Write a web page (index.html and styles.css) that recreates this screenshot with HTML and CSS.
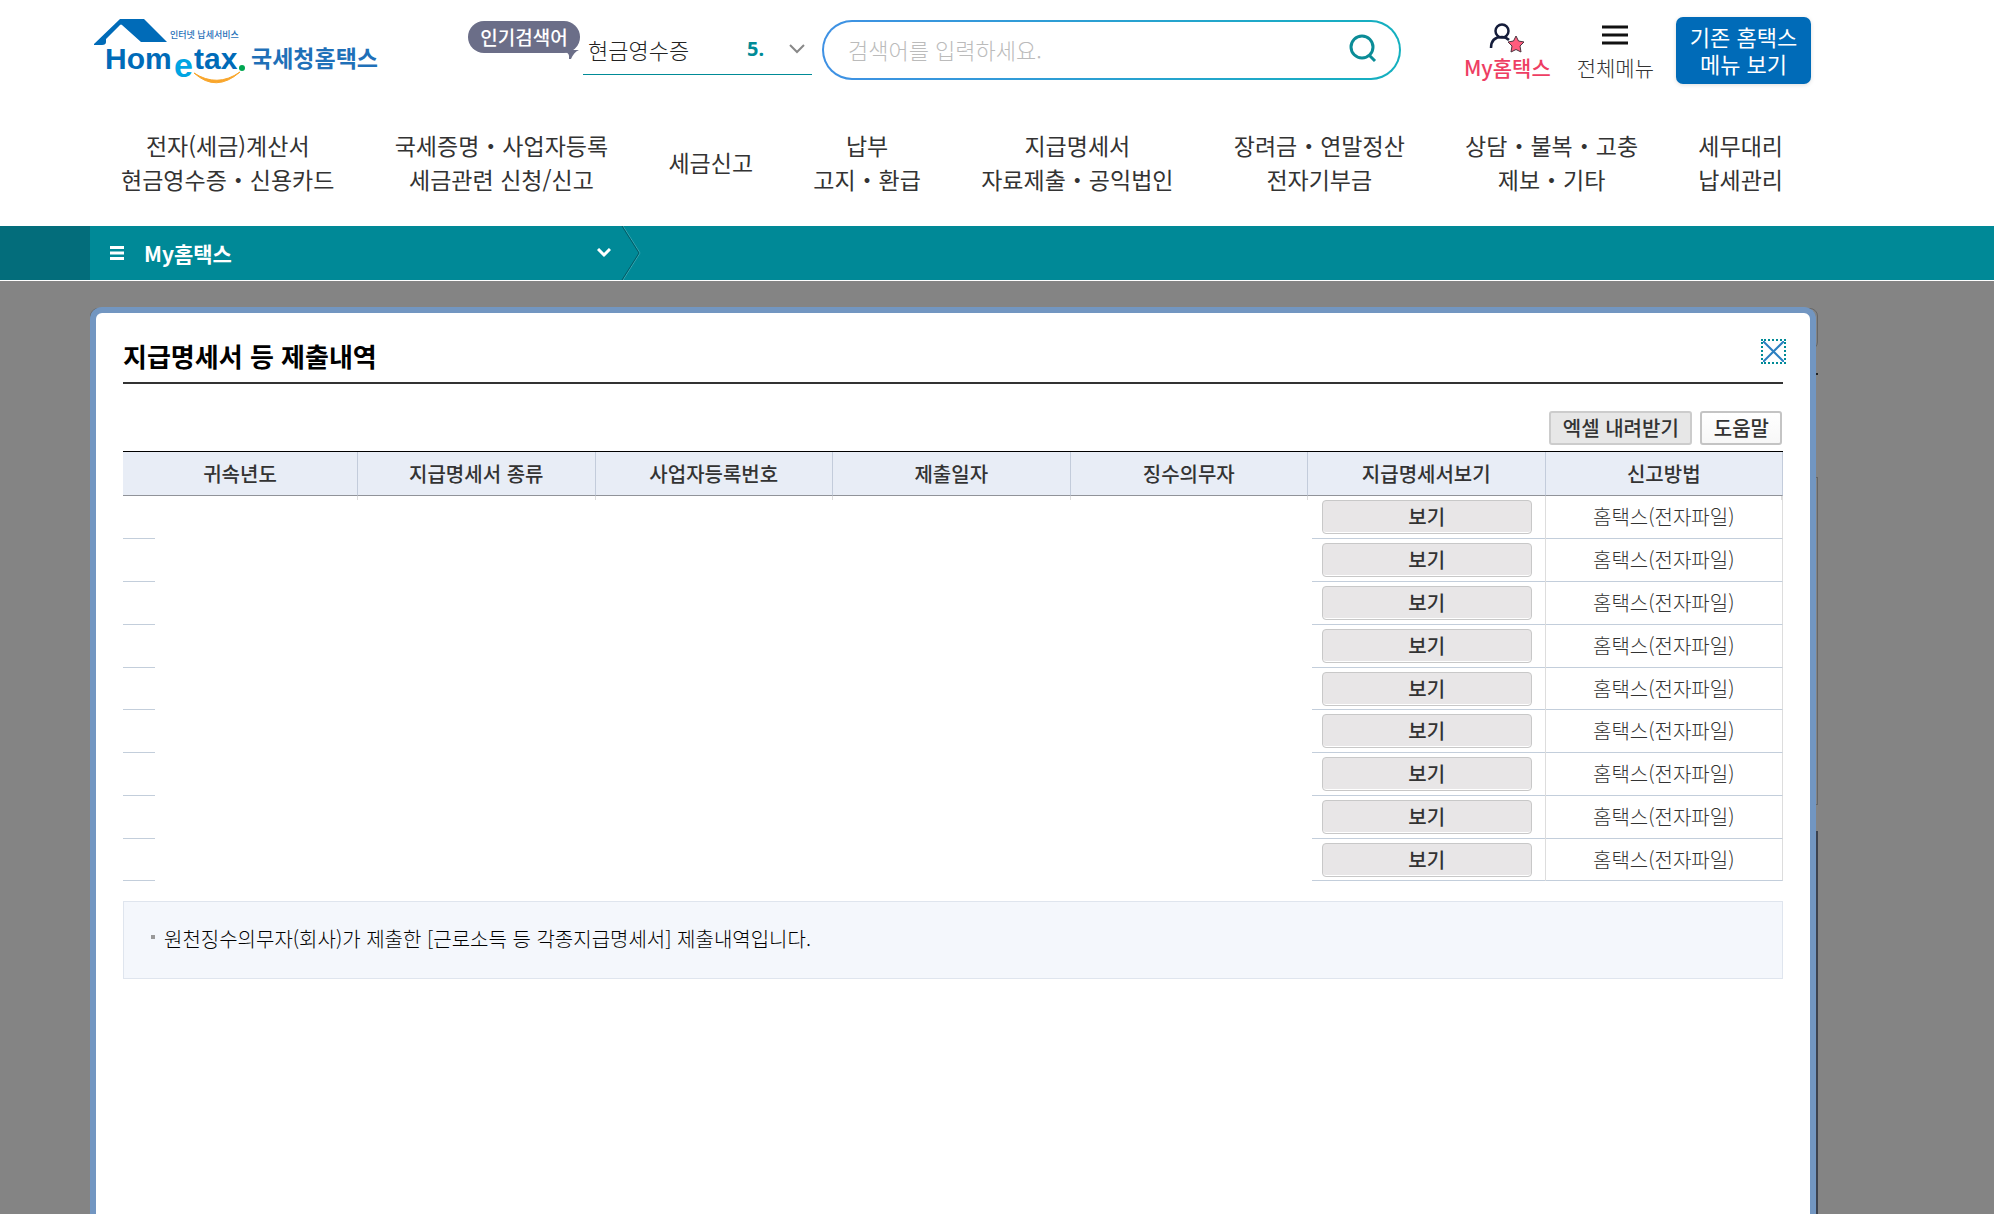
FILE: index.html
```html
<!DOCTYPE html>
<html lang="ko">
<head>
<meta charset="utf-8">
<meta name="viewport" content="width=device-width, initial-scale=1">
<title>국세청 홈택스</title>
<link rel="stylesheet" href="styles.css">
</head>
<body>
<header class="site-header">
  <div class="top-row">
    <a class="logo" href="#" aria-label="국세청홈택스">
      <svg width="286" height="68" viewBox="0 0 286 68">
        <path class="logo-roof" d="M0 28 26 3H50L73 26H47L28 9Q27 8 26 9L12 23V26Q12 29 8 29H1Q-1 29 0 28Z"/>
        <text class="logo-latin" x="11" y="53">Hom</text>
        <text class="logo-e" x="80" y="61">e</text>
        <text class="logo-latin" x="100" y="53">tax</text>
        <circle class="logo-dot" cx="148" cy="52" r="3"/>
        <path class="logo-smile" d="M100 57Q122 77 146 56Q123 72 100 57Z"/>
        <text class="logo-tag" x="76" y="22">인터넷 납세서비스</text>
        <text class="logo-name" x="157" y="51">국세청홈택스</text>
      </svg>
    </a>
    <span class="badge">인기검색어
      <svg class="badge-tail" width="14" height="10" viewBox="0 0 14 10"><path d="M0 0H14Q9 2 6 9H4Q5 3 0 2Z"/></svg>
    </span>
    <button class="ticker" type="button">
      <span>현금영수증</span>
      <span class="ticker-rank">5.</span>
      <svg width="18" height="12" viewBox="0 0 18 12"><path d="M2 2 9 9 16 2"/></svg>
    </button>
    <form class="search">
      <input class="search-input" type="text" placeholder="검색어를 입력하세요." aria-label="검색어">
      <button class="search-button" type="button" aria-label="검색">
        <svg width="28" height="30" viewBox="0 0 28 30"><circle cx="13" cy="13" r="11"/><path d="M20 21 26 27"/></svg>
      </button>
    </form>
    <a class="tool tool-my" href="#">
      <svg width="36" height="30" viewBox="0 0 36 30">
        <circle class="person" cx="13" cy="8" r="6.5"/>
        <path class="person" d="M2 25Q2 14 13 14Q17 14 20 17"/>
        <path class="star" d="M27 13 29.500 18 35 19 31 23 32 29 27 26.500 22 29 23 23 19 19 24.500 18Z"/>
      </svg>
      <span>My홈택스</span>
    </a>
    <a class="tool" href="#">
      <svg width="28" height="30" viewBox="0 0 28 30"><path class="bars" d="M1 4H27M1 12H27M1 20H27"/></svg>
      <span>전체메뉴</span>
    </a>
    <button class="old-menu" type="button">기존 홈택스<br>메뉴 보기</button>
  </div>
  <nav class="main-nav">
    <a href="#">전자(세금)계산서<br>현금영수증・신용카드</a>
    <a href="#">국세증명・사업자등록<br>세금관련 신청/신고</a>
    <a href="#">세금신고</a>
    <a href="#">납부<br>고지・환급</a>
    <a href="#">지급명세서<br>자료제출・공익법인</a>
    <a href="#">장려금・연말정산<br>전자기부금</a>
    <a href="#">상담・불복・고충<br>제보・기타</a>
    <a href="#">세무대리<br>납세관리</a>
  </nav>
</header>

<div class="location-bar">
  <button class="location" type="button">
    <svg width="14" height="16" viewBox="0 0 14 16"><path d="M0 2.500H14M0 8H14M0 13.500H14"/></svg>
    <span class="location-name">My홈택스</span>
    <svg width="14" height="10" viewBox="0 0 14 10"><path d="M1 1 7 7 13 1"/></svg>
  </button>
  <svg class="location-arrow" width="20" height="54" viewBox="0 0 20 54"><path class="arrow-light" d="M2 0 19 27 2 54"/><path class="arrow-dark" d="M1 0 18 27 1 54"/></svg>
</div>

<main class="stage">
  <div class="page-behind">
    <div class="behind-tab"></div>
    <div class="behind-rule"></div>
    <div class="behind-box"></div>
    <div class="behind-panel"></div>
  </div>
  <section class="dialog" role="dialog" aria-labelledby="dialog-title">
    <div class="dialog-head">
      <h1 id="dialog-title">지급명세서 등 제출내역</h1>
      <button class="close" type="button" aria-label="닫기">
        <svg width="21" height="21" viewBox="0 0 21 21"><path d="M0 0 21 21M21 0 0 21"/></svg>
      </button>
    </div>
    <div class="actions">
      <button class="btn btn-gray" type="button">엑셀 내려받기</button>
      <button class="btn btn-white" type="button">도움말</button>
    </div>
    <table class="grid">
      <thead>
        <tr><th>귀속년도</th><th>지급명세서 종류</th><th>사업자등록번호</th><th>제출일자</th><th>징수의무자</th><th>지급명세서보기</th><th>신고방법</th></tr>
      </thead>
      <tbody>
        <tr><td></td><td></td><td></td><td></td><td></td><td class="view"><button class="view-btn" type="button">보기</button></td><td class="method">홈택스(전자파일)</td></tr>
        <tr><td></td><td></td><td></td><td></td><td></td><td class="view"><button class="view-btn" type="button">보기</button></td><td class="method">홈택스(전자파일)</td></tr>
        <tr><td></td><td></td><td></td><td></td><td></td><td class="view"><button class="view-btn" type="button">보기</button></td><td class="method">홈택스(전자파일)</td></tr>
        <tr><td></td><td></td><td></td><td></td><td></td><td class="view"><button class="view-btn" type="button">보기</button></td><td class="method">홈택스(전자파일)</td></tr>
        <tr><td></td><td></td><td></td><td></td><td></td><td class="view"><button class="view-btn" type="button">보기</button></td><td class="method">홈택스(전자파일)</td></tr>
        <tr><td></td><td></td><td></td><td></td><td></td><td class="view"><button class="view-btn" type="button">보기</button></td><td class="method">홈택스(전자파일)</td></tr>
        <tr><td></td><td></td><td></td><td></td><td></td><td class="view"><button class="view-btn" type="button">보기</button></td><td class="method">홈택스(전자파일)</td></tr>
        <tr><td></td><td></td><td></td><td></td><td></td><td class="view"><button class="view-btn" type="button">보기</button></td><td class="method">홈택스(전자파일)</td></tr>
        <tr><td></td><td></td><td></td><td></td><td></td><td class="view"><button class="view-btn" type="button">보기</button></td><td class="method">홈택스(전자파일)</td></tr>
      </tbody>
    </table>
    <ul class="note">
      <li>원천징수의무자(회사)가 제출한 [근로소득 등 각종지급명세서] 제출내역입니다.</li>
    </ul>
  </section>
</main>
</body>
</html>
```
FILE: styles.css
```css
* { box-sizing: border-box; }

body {
  margin: 0;
  min-height: 100vh;
  display: flex;
  flex-direction: column;
  background: #848484;
  color: #333;
  font-family: "Noto Sans CJK KR", sans-serif;
  font-size: 20px;
  line-height: 28px;
}

a { color: inherit; text-decoration: none; }
button { font: inherit; color: inherit; padding: 0; border: 0; background: none; }
svg { display: block; fill: none; flex: none; }

/* Header */
.site-header { background: #fff; }

.top-row {
  display: flex;
  align-items: center;
  height: 100px;
  padding: 0 183px 0 94px;
  white-space: nowrap;
}

.logo { margin-right: 88px; }
.logo-roof { fill: #006bb8; }
.logo-latin, .logo-e {
  font-family: "Liberation Sans", sans-serif;
  font-weight: 700;
  font-size: 30px;
  fill: #006bb8;
}
.logo-e { font-size: 34px; fill: #00a5e3; }
.logo-dot { fill: #00a651; }
.logo-smile { fill: #f9a62b; stroke: #f9a62b; stroke-width: 1; }
.logo-tag { font-size: 9px; font-weight: 500; fill: #1f70b8; }
.logo-name { font-size: 23px; font-weight: 700; fill: #1f70b8; }

.badge {
  position: relative;
  align-self: flex-start;
  width: 112px;
  margin: 21px 3px 0 0;
  border-radius: 16px;
  background: #6b6e88;
  color: #fff;
  font-size: 19px;
  font-weight: 500;
  line-height: 32px;
  text-align: center;
}
.badge-tail { position: absolute; right: 1px; bottom: -7px; fill: #6b6e88; }

.ticker {
  display: flex;
  align-items: center;
  width: 229px;
  height: 50px;
  margin-right: 10px;
  padding: 0 6px 2px 5px;
  border-bottom: 1px solid #008b97;
  color: #222;
  font-size: 22px;
  font-weight: 300;
}
.ticker svg { stroke: #888; stroke-width: 2; }
.ticker-rank {
  margin: 0 24px 0 auto;
  color: #008b97;
  font-family: "Noto Sans", sans-serif;
  font-size: 20px;
  font-weight: 700;
}

.search {
  flex: 1;
  display: flex;
  align-items: center;
  height: 60px;
  margin-right: 63px;
  padding: 0 22px 2px 24px;
  border: 2px solid transparent;
  border-radius: 30px;
  background:
    linear-gradient(#fff, #fff) padding-box,
    linear-gradient(90deg, #3f91e4, #14b0bf) border-box;
}
.search-input {
  flex: 1;
  min-width: 0;
  padding: 0;
  border: 0;
  outline: 0;
  background: none;
  font: inherit;
  font-size: 22px;
  font-weight: 300;
}
.search-input::placeholder { color: #bbb; }
.search-button svg { stroke: #0b8c97; stroke-width: 3; }

.tool {
  display: flex;
  flex-direction: column;
  align-items: center;
  margin-right: 22px;
  padding-top: 3px;
  font-size: 21px;
  font-weight: 300;
}
.tool-my { margin-right: 26px; color: #ee3e63; font-weight: 500; }
.person { stroke: #141c3a; stroke-width: 2.5; }
.star { fill: #ff5c7d; stroke: #4a3540; stroke-width: 1; }
.bars { stroke: #111; stroke-width: 3; }

.old-menu {
  width: 135px;
  height: 67px;
  border-radius: 7px;
  background: #006bb8;
  box-shadow: 0 1px 4px #0002;
  color: #fff;
  font-size: 22px;
  line-height: 27px;
}

.main-nav {
  display: flex;
  justify-content: space-between;
  align-items: center;
  padding: 28px 211px 30px 121px;
  font-size: 23px;
  line-height: 34px;
  text-align: center;
  white-space: nowrap;
}

/* Location bar */
.location-bar {
  display: flex;
  height: 55px;
  border-bottom: 1px solid #fff;
  background: linear-gradient(90deg, #036d7b 90px, #008997 90px);
}
.location {
  display: flex;
  align-items: center;
  width: 531px;
  margin-left: 90px;
  padding: 0 10px 0 20px;
  color: #fff;
  font-size: 21px;
  font-weight: 700;
}
.location svg { stroke: #fff; stroke-width: 3; }
.location-name { margin: 0 auto 0 20px; }
.arrow-light { stroke: #3aa6b1; }
.arrow-dark { stroke: #045a64; }

/* Dimmed page with the dialog stacked over it */
.stage { flex: 1; display: grid; }
.page-behind, .dialog { grid-area: 1 / 1; }

.page-behind {
  display: flex;
  flex-direction: column;
  margin: 27px 176px 0 90px;
}
.behind-tab { height: 42px; border: 1px solid #666; border-radius: 8px; }
.behind-rule { height: 2px; margin: 23px 0 102px; background: #222; }
.behind-box { height: 328px; border: 1px solid #666; }
.behind-panel { flex: 1; margin-top: 26px; background: #3c424e; }

.dialog {
  margin: 26px 178px 0 90px;
  padding: 22px 27px 40px;
  border: 6px solid #7296c1;
  border-bottom: 0;
  border-radius: 12px 12px 0 0;
  background: #fff;
}

.dialog-head {
  display: flex;
  justify-content: space-between;
  height: 49px;
  border-bottom: 2px solid #333;
}
h1 { margin: 0; color: #000; font-size: 26px; font-weight: 700; line-height: 42px; }
.close {
  width: 25px;
  height: 25px;
  margin: 4px -3px 0 0;
  border: 2px dotted #008b97;
}
.close svg { stroke: #2b7fc0; stroke-width: 2; }

.actions {
  display: flex;
  justify-content: flex-end;
  gap: 8px;
  padding: 27px 1px 6px;
}
.btn {
  height: 34px;
  padding: 0 11px 0 12px;
  border: 2px solid #ccc;
  border-radius: 3px;
  line-height: 28px;
  font-weight: 500;
}
.btn-gray { background: #e7e7e7; }
.btn-white { background: linear-gradient(#fff, #f7f7f7); border-color: #c4c4c4; }

.grid {
  width: 100%;
  table-layout: fixed;
  border-collapse: separate;
  border-spacing: 0;
  border-top: 1px solid #000;
}
th, td { padding: 0; text-align: center; }
th {
  height: 44px;
  border-right: 1px solid #c3ccdb;
  border-bottom: 1px solid #909399;
  background: #e8edf6;
  font-weight: 500;
}
th:first-child { width: 235px; }
td { height: 43px; }
tr:nth-child(5) td, tr:last-child td { height: 42px; }

/* Rows are ruled only at the outer edges of the blank columns */
tbody tr:first-child td {
  background: linear-gradient(#ddd, #ddd) right top / 1px 4px no-repeat;
}
tbody td:first-child, tbody tr:first-child td:first-child {
  background:
    linear-gradient(#c3cedb, #c3cedb) left bottom / 32px 1px no-repeat,
    linear-gradient(#ddd, #ddd) right top / 1px 0 no-repeat;
}
tbody tr:first-child td:first-child { background-size: 32px 1px, 1px 4px; }
tbody .view, tbody tr:first-child .view {
  padding: 4px 13px 0 14px;
  border-right: 1px solid #ddd;
  background: linear-gradient(#c3cedb, #c3cedb) 4px bottom / 100% 1px no-repeat;
  vertical-align: top;
}
.method {
  border-right: 1px solid #ddd;
  border-bottom: 1px solid #c3cedb;
  font-weight: 300;
}
.view-btn {
  display: block;
  width: 100%;
  height: 34px;
  border: 1px solid #c8c8c8;
  border-radius: 4px;
  background: #e8e6e7;
  box-shadow: inset 0 -1px #fff;
  line-height: 28px;
  font-weight: 500;
}

.note {
  margin: 20px 0 0;
  padding: 23px 27px 25px;
  border: 1px solid #dfe5ee;
  background: #f4f7fc;
  color: #000;
  font-weight: 300;
  list-style: none;
}
.note li { display: flex; gap: 9px; }
.note li::before { content: ""; width: 4px; height: 4px; margin-top: 10px; background: #999; }
```
